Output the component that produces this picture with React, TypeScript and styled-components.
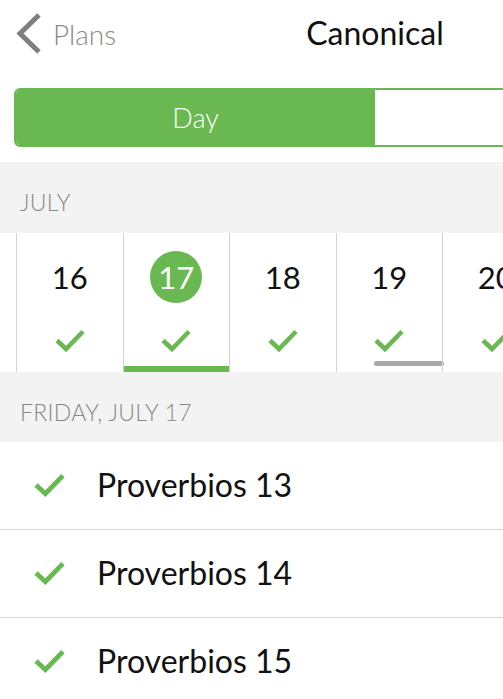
import { FC } from 'react'
import styled, { createGlobalStyle } from 'styled-components'

const GREEN = '#6ab851'

const GlobalStyle = createGlobalStyle`
  html, body {
    margin: 0;
    padding: 0;
    background: #ffffff;
    overflow: hidden;
  }
  body {
    font-family: Lato, 'Open Sans', sans-serif;
  }
`

type Day = {
  num: number
  done: boolean
  selected?: boolean
  today?: boolean
}

const days: Day[] = [
  { num: 16, done: true },
  { num: 17, done: true, selected: true },
  { num: 18, done: true },
  { num: 19, done: true, today: true },
  { num: 20, done: true },
]

const readings = ['Proverbios 13', 'Proverbios 14', 'Proverbios 15']

const Check: FC<{ size?: number }> = ({ size = 30 }) => (
  <svg width={size} height={(size * 24) / 30} viewBox="0 0 30 24" fill="none">
    <polyline
      points="2,12.5 11,21 28,3.5"
      stroke={GREEN}
      strokeWidth="4.6"
      strokeLinecap="butt"
      strokeLinejoin="miter"
    />
  </svg>
)

const App: FC = () => {
  return (
    <Screen>
      <GlobalStyle />
      <NavBar>
        <BackButton>
          <svg width="30" height="45" viewBox="0 0 30 45" fill="none">
            <polyline
              points="25,4 6,22.5 25,41"
              stroke="#7f7f7f"
              strokeWidth="5"
              strokeLinejoin="miter"
            />
          </svg>
          <BackLabel>Plans</BackLabel>
        </BackButton>
        <NavTitle>Canonical</NavTitle>
        <span />
      </NavBar>

      <SegmentWrap>
        <Segmented>
          <Segment active>Day</Segment>
          <Segment />
        </Segmented>
      </SegmentWrap>

      <SectionHeader tall>JULY</SectionHeader>

      <WeekStrip>
        {days.map((d) => (
          <DayCell key={d.num} selected={d.selected}>
            <DayNum selected={d.selected}>{d.num}</DayNum>
            <DayCheck>{d.done && <Check />}</DayCheck>
            {d.today && <TodayBar />}
          </DayCell>
        ))}
      </WeekStrip>

      <SectionHeader>FRIDAY, JULY 17</SectionHeader>

      <List>
        {readings.map((r) => (
          <Row key={r}>
            <RowCheck>
              <Check size={31} />
            </RowCheck>
            <RowLabel>{r}</RowLabel>
          </Row>
        ))}
      </List>
    </Screen>
  )
}

export default App

const Screen = styled.div`
  width: 750px;
  min-height: 699px;
  background: #ffffff;
`

const NavBar = styled.div`
  display: grid;
  grid-template-columns: 1fr auto 1fr;
  align-items: center;
  height: 62px;
  padding: 2px 0 0 14px;
`

const BackButton = styled.div`
  display: flex;
  align-items: center;
  gap: 9px;
`

const BackLabel = styled.span`
  font-size: 28px;
  font-weight: 300;
  color: #8a8a8a;
  margin-top: 1px;
`

const NavTitle = styled.div`
  font-size: 32px;
  color: #111111;
  margin-left: -14px;
  margin-top: -2px;
`

const SegmentWrap = styled.div`
  padding: 24px 14px 15px;
`

const Segmented = styled.div`
  display: flex;
  height: 59px;
  border: 2px solid ${GREEN};
  border-radius: 6px;
  overflow: hidden;
  box-sizing: border-box;
`

const Segment = styled.div<{ active?: boolean }>`
  flex: 1;
  display: flex;
  align-items: center;
  justify-content: center;
  font-size: 27px;
  font-weight: 300;
  background: ${(p) => (p.active ? GREEN : '#ffffff')};
  color: ${(p) => (p.active ? '#ffffff' : GREEN)};
`

const SectionHeader = styled.div<{ tall?: boolean }>`
  background: #f3f3f3;
  height: ${(p) => (p.tall ? '71px' : '70px')};
  box-sizing: border-box;
  padding: 26px 0 0 20px;
  font-size: 23px;
  font-weight: 300;
  color: #888888;
  letter-spacing: 0.3px;
`

const WeekStrip = styled.div`
  display: flex;
  height: 139px;
  background: #ffffff;
  padding-left: 16px;
`

const DayCell = styled.div<{ selected?: boolean }>`
  position: relative;
  flex: 0 0 106.5px;
  box-sizing: border-box;
  border-left: 1px solid #d3d3d3;
  display: flex;
  flex-direction: column;
  align-items: center;
  box-shadow: ${(p) => (p.selected ? `inset 0 -6px 0 ${GREEN}` : 'none')};
`

const DayNum = styled.div<{ selected?: boolean }>`
  margin-top: 18px;
  width: 52px;
  height: 52px;
  border-radius: 50%;
  display: flex;
  align-items: center;
  justify-content: center;
  font-size: 31px;
  color: ${(p) => (p.selected ? '#ffffff' : '#111111')};
  background: ${(p) => (p.selected ? GREEN : 'transparent')};
`

const DayCheck = styled.div`
  margin-top: 25px;
  height: 24px;
  display: flex;
`

const TodayBar = styled.div`
  position: absolute;
  left: 37px;
  right: -2px;
  bottom: 6px;
  height: 5px;
  border-radius: 3px;
  background: #a9a9a9;
`

const List = styled.div`
  background: #ffffff;
`

const Row = styled.div`
  display: flex;
  align-items: center;
  height: 88px;
  box-sizing: border-box;
  border-bottom: 1px solid #d6d6d6;
`

const RowCheck = styled.div`
  width: 97px;
  display: flex;
  padding-left: 34px;
  box-sizing: border-box;
  margin-top: -2px;
`

const RowLabel = styled.div`
  font-size: 32px;
  color: #111111;
  margin-top: -3px;
`
